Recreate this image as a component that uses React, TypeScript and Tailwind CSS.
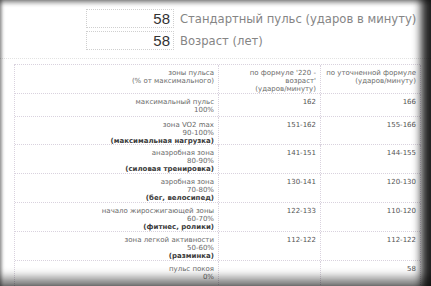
import React from "react";

type Row = { h: string; c1: string[]; bold?: string; c2: string; c3: string };

const rows: Row[] = [
  { h: "h-[23px]", c1: ["максимальный пульс", "100%"], c2: "162", c3: "166" },
  { h: "h-[28px]", c1: ["зона VO2 max", "90-100%"], bold: "(максимальная нагрузка)", c2: "151-162", c3: "155-166" },
  { h: "h-[29px]", c1: ["анаэробная зона", "80-90%"], bold: "(силовая тренировка)", c2: "141-151", c3: "144-155" },
  { h: "h-[29px]", c1: ["аэробная зона", "70-80%"], bold: "(бег, велосипед)", c2: "130-141", c3: "120-130" },
  { h: "h-[29px]", c1: ["начало жиросжигающей зоны", "60-70%"], bold: "(фитнес, ролики)", c2: "122-133", c3: "110-120" },
  { h: "h-[29px]", c1: ["зона легкой активности", "50-60%"], bold: "(разминка)", c2: "112-122", c3: "112-122" },
  { h: "h-[29px]", c1: ["пульс покоя", "0%"], c2: "", c3: "58" },
];

const cell = "border-r border-dotted border-[#d9d2de] pt-[4px] pr-[4px] text-right";

export default function App() {
  return (
    <div className="relative w-[431px] h-[286px] overflow-hidden bg-white" style={{ fontFamily: "'DejaVu Sans', Verdana, sans-serif" }}>
      <div className="flex flex-col pt-[9px]">
        <div className="flex items-center gap-[6px] pl-[86px]">
          <div className="w-[88px] h-[19px] border border-dotted border-[#cfcfcf] text-right pr-[3px] text-[15px] leading-[18px] text-[#333]" style={{ fontFamily: "'Liberation Sans', Arial, sans-serif" }}>58</div>
          <div className="text-[11.6px] leading-[18px] text-[#858585]">Стандартный пульс (ударов в минуту)</div>
        </div>
        <div className="flex items-center gap-[6px] pl-[86px] mt-[3px]">
          <div className="w-[88px] h-[19px] border border-dotted border-[#cfcfcf] text-right pr-[3px] text-[15px] leading-[18px] text-[#333]" style={{ fontFamily: "'Liberation Sans', Arial, sans-serif" }}>58</div>
          <div className="text-[11.6px] leading-[18px] text-[#858585]">Возраст (лет)</div>
        </div>
        <div className="mt-[8px] h-0 border-t border-dotted border-[#e2e2e2]" />
        <div className="ml-[14px] mt-[5px] w-[406px] border-t border-l border-dotted border-[#d9d2de] text-[7px] leading-[8px] text-[#6a6a6a]">
          <div className="grid grid-cols-[204px_102px_100px] h-[29px] border-b border-dotted border-[#d9d2de]">
            <div className={cell}>
              <div>зоны пульса</div>
              <div>(% от максимального)</div>
            </div>
            <div className={cell}>
              <div>по формуле '220 -</div>
              <div>возраст'</div>
              <div>(ударов/минуту)</div>
            </div>
            <div className={cell + " pr-[2px]"}>
              <div>по уточненной формуле</div>
              <div>(ударов/минуту)</div>
            </div>
          </div>
          {rows.map((r, i) => (
            <div key={i} className={"grid grid-cols-[204px_102px_100px] border-b border-dotted border-[#d9d2de] " + r.h}>
              <div className={cell}>
                {r.c1.map((t, j) => (
                  <div key={j}>{t}</div>
                ))}
                {r.bold && <div className="font-bold text-[#3a3a3a]">{r.bold}</div>}
              </div>
              <div className={cell + " text-[#555]"}>{r.c2}</div>
              <div className={cell + " pr-[2px] text-[#555]"}>{r.c3}</div>
            </div>
          ))}
        </div>
      </div>
      <div className="pointer-events-none absolute inset-0 shadow-[inset_0_4px_4px_-1px_rgba(0,0,0,0.3),inset_3px_0_3px_-1px_rgba(0,0,0,0.3),inset_-13px_0_9px_-3px_rgba(0,0,0,0.85),inset_0_-13px_10px_-4px_rgba(0,0,0,0.45)]" />
    </div>
  );
}
